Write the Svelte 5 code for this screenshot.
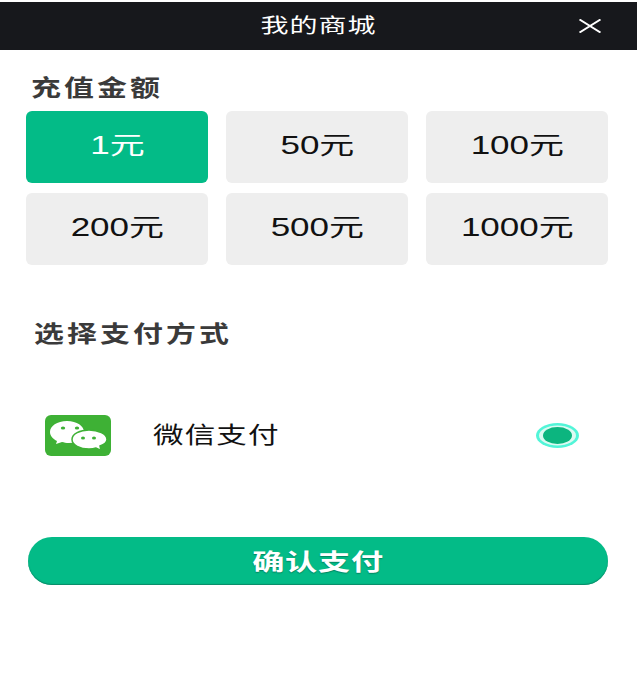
<script>
  const amounts = ['1元', '50元', '100元', '200元', '500元', '1000元'];
  let selected = $state(0);
</script>

<div class="page">
  <header class="topbar">
    <span class="wide title">我的商城</span>
    <button class="close" aria-label="关闭">
      <svg width="22" height="14" viewBox="0 0 22 14"><path d="M0.500 0.500 L21.500 13.500 M21.500 0.500 L0.500 13.500" stroke="#fff" stroke-width="2" fill="none"/></svg>
    </button>
  </header>

  <h2 class="head first"><span class="wide">充值金额</span></h2>
  <div class="grid">
    {#each amounts as a, i}
      <button class="amount" class:on={i === selected} onclick={() => (selected = i)}><span class="wide">{a}</span></button>
    {/each}
  </div>

  <h2 class="head second"><span class="wide">选择支付方式</span></h2>

  <div class="pay">
    <div class="logo">
      <svg width="66" height="41" viewBox="0 0 66 41">
        <rect width="66" height="41" rx="6" fill="#3eb135"/>
        <path d="M22 6 C12 6 5 11 5 17 C5 21 8 24 12 26 L11 29 L17 27 C19 27.500 21 28 24 28 C34 28 39 22 39 17 C39 11 32 6 22 6Z" fill="#fff"/>
        <path d="M44 15 C35 15 27 19 27 24.500 C27 30 35 34 44 34 C47 34 49 33.700 51 33 L56 35.500 L55 31 C59 29.500 62 27 62 24.500 C62 19 53 15 44 15Z" fill="#fff" stroke="#3eb135" stroke-width="1.500"/>
        <ellipse cx="18" cy="13" rx="2.200" ry="1.600" fill="#3eb135"/>
        <ellipse cx="32" cy="13" rx="2.200" ry="1.600" fill="#3eb135"/>
        <ellipse cx="38" cy="23" rx="2" ry="1.500" fill="#3eb135"/>
        <ellipse cx="49" cy="23" rx="2" ry="1.500" fill="#3eb135"/>
      </svg>
    </div>
    <span class="pay-name"><span class="wide">微信支付</span></span>
    <svg class="radio" width="43" height="25" viewBox="0 0 43 25">
      <ellipse cx="21.500" cy="12.500" rx="21.500" ry="12.500" fill="#52f5d8"/>
      <ellipse cx="21.500" cy="12.500" rx="18.500" ry="10" fill="#dcfaf2"/>
      <ellipse cx="21.500" cy="12.500" rx="14.500" ry="8.500" fill="#0cb57f"/>
    </svg>
  </div>

  <button class="confirm"><span class="wide">确认支付</span></button>
</div>

<style>
  :global(body) {
    margin: 0;
    background: #fff;
  }
  .page {
    width: 637px;
    height: 698px;
    padding-top: 2px;
    box-sizing: border-box;
    overflow: hidden;
    font-family: "Liberation Sans", "Noto Sans CJK SC", sans-serif;
    color: #111;
  }
  .wide {
    display: inline-block;
    transform: scaleX(1.4);
    white-space: nowrap;
  }
  .topbar {
    height: 48px;
    background: #17181c;
    color: #fff;
    font-size: 20px;
    display: flex;
    align-items: center;
    justify-content: center;
    position: relative;
  }
  .title {
    letter-spacing: 0.7px;
    padding-bottom: 4px;
  }
  .close {
    position: absolute;
    right: 36px;
    top: 17px;
    padding: 0;
    border: 0;
    background: none;
    line-height: 0;
  }
  .head {
    margin: 0;
    font-size: 23px;
    line-height: 30px;
    font-weight: 700;
    color: #3a3a3a;
    letter-spacing: 2.400px;
  }
  .head .wide {
    transform: scaleX(1.3);
    transform-origin: left;
  }
  .first {
    padding: 23px 0 0 31px;
  }
  .second {
    padding: 54px 0 0 34px;
  }
  .grid {
    display: grid;
    grid-template-columns: repeat(3, 182px);
    grid-auto-rows: 72px;
    column-gap: 18px;
    row-gap: 10px;
    margin: 8px 0 0 26px;
  }
  .amount {
    border: 0;
    border-radius: 6px;
    background: #eee;
    color: #111;
    font: inherit;
    font-size: 25px;
    padding: 0 0 8px;
  }
  .amount.on {
    background: #03bb87;
    color: #fff;
  }
  .pay {
    display: flex;
    align-items: center;
    margin: 66px 0 0 45px;
    height: 41px;
  }
  .logo {
    width: 66px;
    height: 41px;
    line-height: 0;
  }
  .pay-name {
    margin-left: 42px;
    font-size: 23px;
    letter-spacing: 0.8px;
    flex: 1;
    padding-bottom: 6px;
  }
  .pay-name .wide {
    transform: scaleX(1.33);
    transform-origin: left;
  }
  .radio {
    margin-right: 58px;
  }
  .confirm {
    display: block;
    width: 580px;
    height: 48px;
    margin: 81px 0 0 28px;
    border: 0;
    border-radius: 24px;
    background: #03bb87;
    box-shadow: inset 0 -1px 1px #0a8a68;
    color: #fff;
    font: inherit;
    font-size: 23px;
    font-weight: 700;
    letter-spacing: 0.500px;
    padding: 0 0 2px;
    text-shadow: 0 1px 1px rgba(0, 0, 0, 0.3);
  }
</style>
